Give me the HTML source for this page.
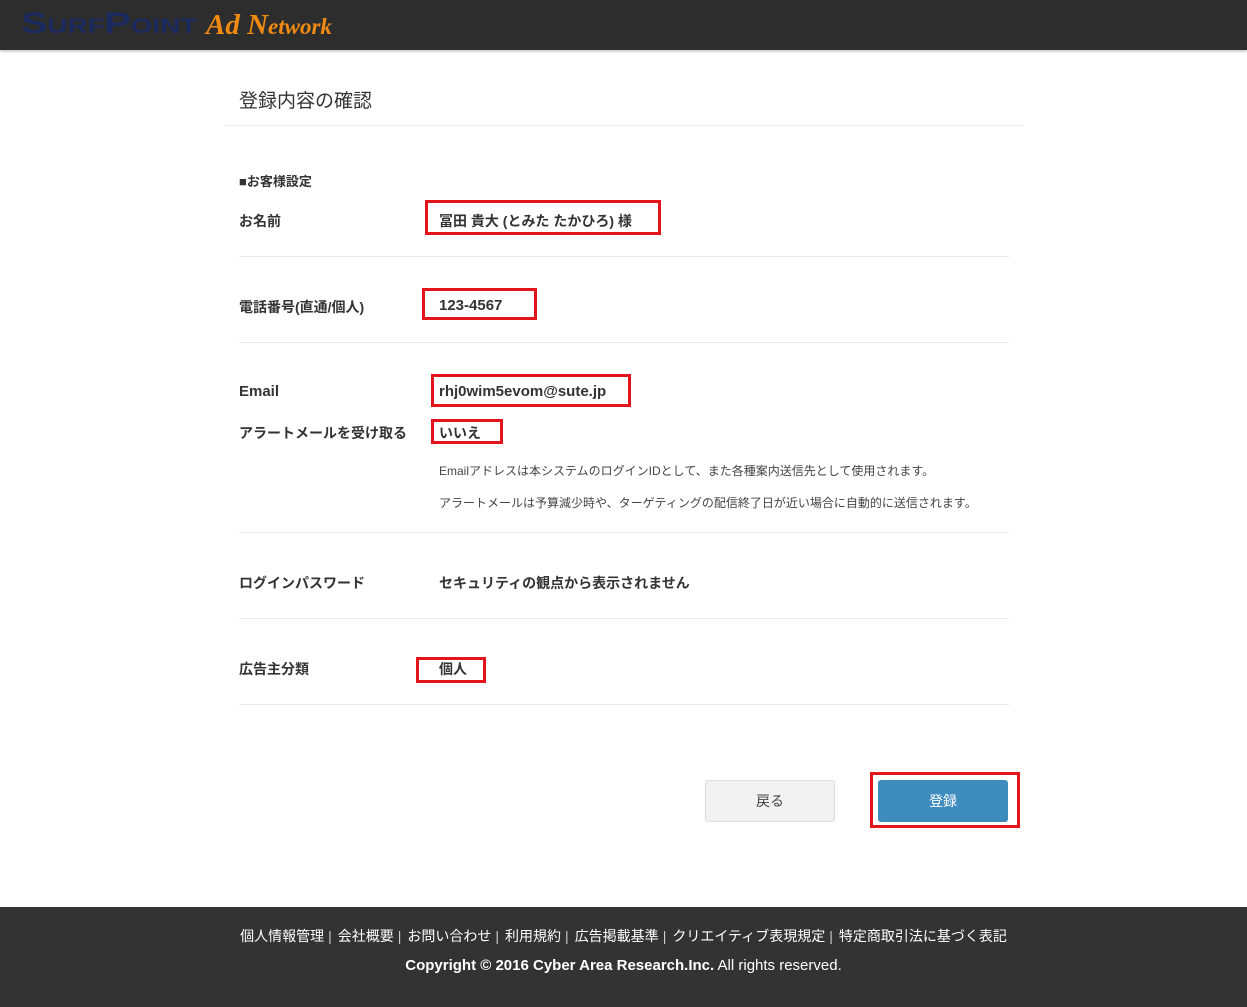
<!DOCTYPE html>
<html><head><meta charset="utf-8">
<style>
*{margin:0;padding:0;box-sizing:border-box}
body{width:1247px;height:1007px;background:#fff;font-family:"Liberation Sans","Noto Sans CJK JP",sans-serif;color:#333;position:relative;overflow:hidden}
.hdr{position:absolute;left:0;top:0;width:1247px;height:50px;background:#2d2d2d;box-shadow:0 1px 3px rgba(0,0,0,.3)}
.logo1{position:absolute;left:21px;top:9px;font-family:"Liberation Sans",sans-serif;font-weight:bold;color:#1a2a5e;line-height:30px;white-space:nowrap;transform:scaleX(1.32);transform-origin:left center}
.logo1 .L{font-size:30px}.logo1 .s{font-size:21px}
.logo2{position:absolute;left:206px;top:8px;font-family:"Liberation Serif",serif;font-style:italic;font-weight:bold;color:#f08a10;line-height:34px;white-space:nowrap}
.abs{position:absolute;white-space:nowrap}
.b{font-weight:bold;font-size:14px}
.line{position:absolute;left:239px;width:770px;height:1px;background:#ebebeb}
.red{position:absolute;border:3px solid #e3141b}
.small{font-size:12px;color:#444}
.ftr{position:absolute;left:0;top:907px;width:1247px;height:100px;background:#333}
.sep{color:#ccc;margin:0 6px 0 4px}
</style></head><body>
<div class="hdr"><div class="logo1"><span class="L">S</span><span class="s">URF</span><span class="L">P</span><span class="s">OINT</span></div><div class="logo2"><span style="font-size:29px">Ad N</span><span style="font-size:23px">etwork</span></div></div>
<div class="abs" style="left:239px;top:86px;font-size:19px;color:#333">登録内容の確認</div>
<div class="abs" style="left:224px;top:125px;width:800px;height:1px;background:#eee"></div>

<div class="abs b" style="left:239px;top:171px;font-size:13px">■お客様設定</div>
<div class="abs b" style="left:239px;top:211px">お名前</div>
<div class="red" style="left:425px;top:200px;width:236px;height:35px"></div>
<div class="abs b" style="left:439px;top:211px">冨田 貴大 (とみた たかひろ) 様</div>
<div class="line" style="top:256px"></div>

<div class="abs b" style="left:239px;top:297px">電話番号(直通/個人)</div>
<div class="red" style="left:422px;top:288px;width:115px;height:32px"></div>
<div class="abs b" style="left:439px;top:297px;font-size:15px">123-4567</div>
<div class="line" style="top:342px"></div>

<div class="abs b" style="left:239px;top:383px;font-size:15px">Email</div>
<div class="red" style="left:431px;top:374px;width:200px;height:33px"></div>
<div class="abs b" style="left:439px;top:383px;font-size:15px">rhj0wim5evom@sute.jp</div>
<div class="abs b" style="left:239px;top:423px">アラートメールを受け取る</div>
<div class="red" style="left:431px;top:419px;width:72px;height:25px"></div>
<div class="abs b" style="left:439px;top:423px">いいえ</div>
<div class="abs small" style="left:439px;top:462px">Emailアドレスは本システムのログインIDとして、また各種案内送信先として使用されます。</div>
<div class="abs small" style="left:439px;top:494px">アラートメールは予算減少時や、ターゲティングの配信終了日が近い場合に自動的に送信されます。</div>
<div class="line" style="top:532px"></div>

<div class="abs b" style="left:239px;top:573px">ログインパスワード</div>
<div class="abs b" style="left:439px;top:573px">セキュリティの観点から表示されません</div>
<div class="line" style="top:618px"></div>

<div class="abs b" style="left:239px;top:659px">広告主分類</div>
<div class="red" style="left:416px;top:657px;width:70px;height:26px"></div>
<div class="abs b" style="left:439px;top:659px">個人</div>
<div class="line" style="top:704px"></div>

<div class="abs" style="left:705px;top:780px;width:130px;height:42px;background:#f2f2f2;border:1px solid #ddd;border-radius:3px;text-align:center;line-height:40px;font-size:14px;color:#444">戻る</div>
<div class="red" style="left:870px;top:772px;width:150px;height:56px"></div>
<div class="abs" style="left:878px;top:780px;width:130px;height:42px;background:#3d8cbd;border-radius:3px;text-align:center;line-height:42px;font-size:14px;color:#fff">登録</div>

<div class="ftr">
<div class="abs" style="left:0;width:1247px;top:19px;text-align:center;color:#fff;font-size:14px">個人情報管理<span class="sep">|</span>会社概要<span class="sep">|</span>お問い合わせ<span class="sep">|</span>利用規約<span class="sep">|</span>広告掲載基準<span class="sep">|</span>クリエイティブ表現規定<span class="sep">|</span>特定商取引法に基づく表記</div>
<div class="abs" style="left:0;width:1247px;top:50px;text-align:center;color:#fff;font-size:15px"><b>Copyright © 2016 Cyber Area Research.Inc.</b> All rights reserved.</div>
</div>
</body></html>
